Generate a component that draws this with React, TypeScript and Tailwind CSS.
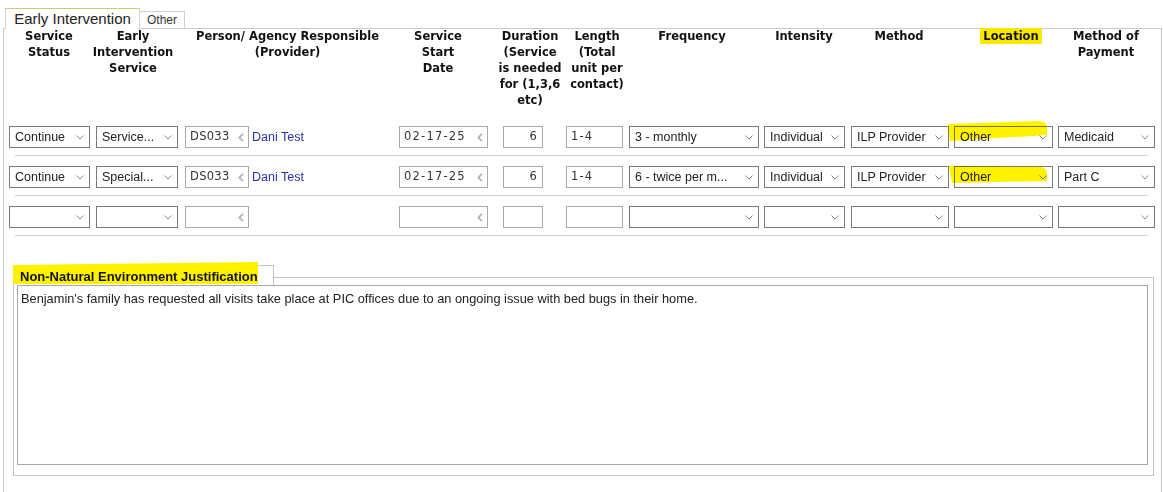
import type { ReactNode } from "react";

const COLS = "grid-cols-[87px_89px_214px_104px_63px_63px_135px_87px_103px_104px_97px]";

const headers: { w: string; lines: string[]; hl?: boolean }[] = [
	{ w: "w-[80px]", lines: ["Service", "Status"] },
	{ w: "w-[74px]", lines: ["Early", "Intervention", "Service"] },
	{ w: "w-[205px]", lines: ["Person/ Agency Responsible", "(Provider)"] },
	{ w: "w-[78px]", lines: ["Service", "Start", "Date"] },
	{ w: "w-[54px]", lines: ["Duration", "(Service", "is needed", "for (1,3,6", "etc)"] },
	{ w: "w-[62px]", lines: ["Length", "(Total", "unit per", "contact)"] },
	{ w: "w-[126px]", lines: ["Frequency"] },
	{ w: "w-[80px]", lines: ["Intensity"] },
	{ w: "w-[96px]", lines: ["Method"] },
	{ w: "w-[114px]", lines: ["Location"], hl: true },
	{ w: "w-[96px]", lines: ["Method of", "Payment"] },
];

type Row = {
	status: string;
	service: string;
	person: string;
	provider: string;
	start: string;
	duration: string;
	length: string;
	frequency: string;
	intensity: string;
	method: string;
	location: string;
	payment: string;
	mark?: "a" | "b";
};

const rows: Row[] = [
	{
		status: "Continue",
		service: "Service...",
		person: "DS033",
		provider: "Dani Test",
		start: "02-17-25",
		duration: "6",
		length: "1-4",
		frequency: "3 - monthly",
		intensity: "Individual",
		method: "ILP Provider",
		location: "Other",
		payment: "Medicaid",
		mark: "a",
	},
	{
		status: "Continue",
		service: "Special...",
		person: "DS033",
		provider: "Dani Test",
		start: "02-17-25",
		duration: "6",
		length: "1-4",
		frequency: "6 - twice per m...",
		intensity: "Individual",
		method: "ILP Provider",
		location: "Other",
		payment: "Part C",
		mark: "b",
	},
	{
		status: "",
		service: "",
		person: "",
		provider: "",
		start: "",
		duration: "",
		length: "",
		frequency: "",
		intensity: "",
		method: "",
		location: "",
		payment: "",
	},
];

function Chevron() {
	return (
		<svg width="8" height="5" viewBox="0 0 8 5" className="shrink-0">
			<polyline points="0.5,0.5 4,4 7.5,0.5" fill="none" stroke="#8a8a8a" strokeWidth="1" />
		</svg>
	);
}

function LeftArrow() {
	return (
		<svg width="6" height="9" viewBox="0 0 6 9" className="shrink-0">
			<polyline points="5,0.8 1.3,4.5 5,8.2" fill="none" stroke="#b4b4b4" strokeWidth="1.8" />
		</svg>
	);
}

function Select({ w, value }: { w: string; value: string }) {
	return (
		<div
			className={`${w} h-[22px] border border-[#7a7a7a] bg-white flex items-center justify-between pl-[5px] pr-[5px] text-[12.5px] text-[#222] font-['Liberation_Sans',Arial,sans-serif]`}
		>
			<span className="whitespace-nowrap overflow-hidden">{value}</span>
			<Chevron />
		</div>
	);
}

function TextBox({
	w,
	value,
	align = "left",
	arrow,
	track = "tracking-[1.2px]",
}: {
	w: string;
	value: string;
	align?: "left" | "right";
	arrow?: boolean;
	track?: string;
}) {
	return (
		<div
			className={`${w} h-[22px] border border-[#a9a9a9] bg-white flex items-center ${
				align === "right" ? "justify-end pr-[4px]" : "justify-between pl-[4px] pr-[4px]"
			} text-[11.5px] ${track} text-[#333] font-['DejaVu_Sans',Verdana,sans-serif]`}
		>
			<span className="whitespace-nowrap">{value}</span>
			{arrow && <LeftArrow />}
		</div>
	);
}

function Highlight({ kind }: { kind: "a" | "b" }) {
	return kind === "a" ? (
		<svg className="absolute left-[-6px] top-[-5px] pointer-events-none mix-blend-multiply" width="100" height="21" viewBox="0 0 100 21">
			<path d="M0 3 L90 0 Q99 0 99 6 L99 14 L2 20 Z" fill="#fff200" />
		</svg>
	) : (
		<svg className="absolute left-[-5px] top-0 pointer-events-none mix-blend-multiply" width="100" height="18" viewBox="0 0 100 18">
			<path d="M0 0 L92 1 Q98 2 98 7 L98 15 L3 17 Z" fill="#fff200" />
		</svg>
	);
}

function Cell({ children }: { children: ReactNode }) {
	return <div className="flex items-start">{children}</div>;
}

export default function App() {
	return (
		<div className="w-[1163px] h-[492px] bg-white overflow-hidden">
			{/* tabs */}
			<div className="flex items-end pt-[8px] pl-[5px] -mb-px relative z-10">
				<div className="h-[21px] w-[135px] border border-b-0 border-[#d4d4d4] border-t-[#c6cf78] bg-white flex items-center justify-center text-[15px] text-[#222] font-['Liberation_Sans',Arial,sans-serif]">
					Early Intervention
				</div>
				<div className="h-[17px] w-[45px] border border-b-0 border-l-0 border-[#cfcfcf] bg-white flex items-center justify-center text-[12px] text-[#333] font-['Liberation_Sans',Arial,sans-serif] mb-px">
					Other
				</div>
			</div>

			<div className="ml-[3px] w-[1159px] h-[470px] border border-b-0 border-[#cbcbcb]">
				{/* header */}
				<div className={`grid ${COLS} ml-[5px] h-[98px] -mt-[1px] font-['DejaVu_Sans',Verdana,sans-serif] font-bold text-[11.5px] leading-[16px] text-[#111]`}>
					{headers.map((h, i) => (
						<div key={i} className={`${h.w} flex flex-col items-center text-center whitespace-nowrap`}>
							{h.lines.map((l) => (
								<span key={l} className={h.hl ? "bg-[#f8e800] px-[3px]" : ""}>
									{l}
								</span>
							))}
						</div>
					))}
				</div>

				{/* rows */}
				{rows.map((r, i) => (
					<div key={i}>
						<div className={`grid ${COLS} ml-[5px] h-[22px]`}>
							<Cell>
								<Select w="w-[81px]" value={r.status} />
							</Cell>
							<Cell>
								<Select w="w-[82px]" value={r.service} />
							</Cell>
							<div className="flex items-center gap-[3px]">
								<TextBox w="w-[64px]" value={r.person} arrow track="tracking-[0.3px]" />
								<span className="text-[12.5px] text-[#2b32a8] font-['Liberation_Sans',Arial,sans-serif]">{r.provider}</span>
							</div>
							<Cell>
								<TextBox w="w-[89px]" value={r.start} arrow />
							</Cell>
							<Cell>
								<TextBox w="w-[40px]" value={r.duration} align="right" />
							</Cell>
							<Cell>
								<TextBox w="w-[57px]" value={r.length} />
							</Cell>
							<Cell>
								<Select w="w-[130px]" value={r.frequency} />
							</Cell>
							<Cell>
								<Select w="w-[81px]" value={r.intensity} />
							</Cell>
							<Cell>
								<Select w="w-[98px]" value={r.method} />
							</Cell>
							<div className="relative flex items-start">
								<Select w="w-[99px]" value={r.location} />
								{r.mark && <Highlight kind={r.mark} />}
							</div>
							<Cell>
								<Select w="w-[98px]" value={r.payment} />
							</Cell>
						</div>
						<div className="ml-[11px] w-[1133px] h-px bg-[#d2d2d2] mt-[7px] mb-[10px]" />
					</div>
				))}

				{/* justification group */}
				<div className="ml-[9px] w-[1141px] mt-[29px]">
					<div className="flex">
						<div className="relative w-[261px] h-[20px] border border-b-0 border-[#c4c4c4]">
							<div className="absolute left-[-1px] top-[-4px] w-[245px] h-[22px] bg-[#fff200] [clip-path:polygon(0_3px,100%_0,100%_100%,0_100%)]" />
							<span className="relative block pl-[6px] pt-[1px] text-[13px] font-bold text-[#111] font-['Liberation_Sans',Arial,sans-serif]">
								Non-Natural Environment Justification
							</span>
						</div>
						<div className="flex-1 mt-[12px] border-t border-r border-[#c4c4c4]" />
					</div>
					<div className="border border-t-0 border-[#c4c4c4] pl-[3px] pr-[5px] pb-[10px]">
						<div className="h-[180px] border border-[#a8a8a8] px-[3px] pt-[3px] text-[12.8px] text-[#222] font-['Liberation_Sans',Arial,sans-serif]">
							Benjamin's family has requested all visits take place at PIC offices due to an ongoing issue with bed bugs in their home.
						</div>
					</div>
				</div>
			</div>
		</div>
	);
}
